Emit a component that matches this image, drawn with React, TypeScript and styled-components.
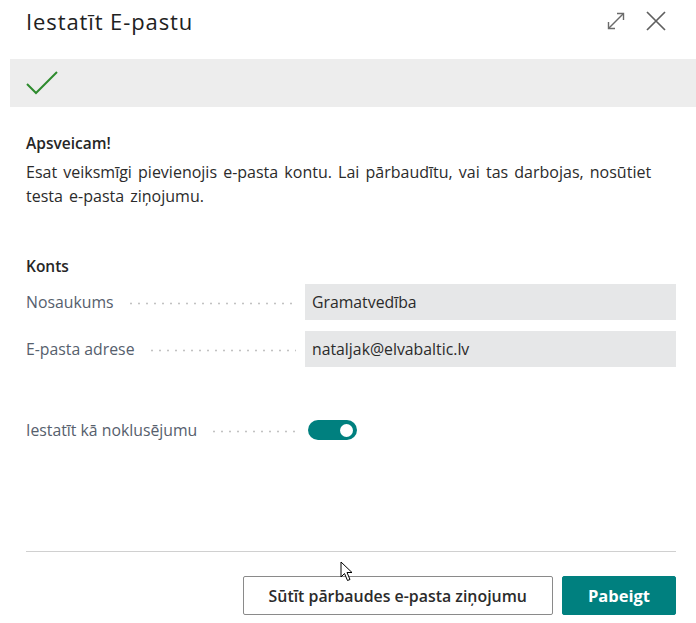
import React from "react"
import styled, { createGlobalStyle } from "styled-components"

const GlobalStyle = createGlobalStyle`
  html, body {
    margin: 0;
    padding: 0;
    background: #ffffff;
  }
  body {
    font-family: "Open Sans", "Noto Sans", "Liberation Sans", sans-serif;
    color: #2b2b2b;
  }
`

const Dialog = styled.div`
  position: relative;
  width: 696px;
  height: 623px;
  display: flex;
  flex-direction: column;
  background: #ffffff;
  overflow: hidden;
`

const Header = styled.div`
  height: 59px;
  display: flex;
  align-items: center;
  padding: 0 26px;
  box-sizing: border-box;
`

const Title = styled.h1`
  flex: 1;
  margin: 0 0 17px 0;
  font-size: 22px;
  font-weight: 500;
  color: #212121;
  letter-spacing: 0.9px;
`

const HeaderIcons = styled.div`
  display: flex;
  align-items: center;
  gap: 20px;
  margin: 0 4px 17px 0;
`

const IconButton = styled.span`
  display: flex;
  width: 20px;
  height: 20px;
`

const Banner = styled.div`
  margin-left: 10px;
  height: 48px;
  background: #ededed;
  display: flex;
  align-items: center;
  padding-left: 16px;
`

const Body = styled.div`
  flex: 1;
  padding: 26px 20px 0 26px;
  display: flex;
  flex-direction: column;
`

const Heading = styled.div`
  font-size: 15.5px;
  font-weight: 600;
  color: #262626;
  line-height: 20px;
`

const Paragraph = styled.p`
  margin: 7px 0 0 0;
  font-size: 16px;
  word-spacing: 2px;
  line-height: 24px;
  color: #2b2b2b;
`

const Section = styled.div<{ $top: number }>`
  margin-top: ${p => p.$top}px;
  display: flex;
  flex-direction: column;
`

const Row = styled.div<{ $gap?: number }>`
  display: flex;
  align-items: center;
  margin-top: ${p => p.$gap ?? 0}px;
`

const Label = styled.div`
  width: 270px;
  flex: none;
  display: flex;
  align-items: center;
  font-size: 15.8px;
  color: #56606d;
  margin-right: 9px;
`

const Leader = styled.span`
  flex: 1;
  height: 3px;
  margin: 2px 0 0 13px;
  background-image: radial-gradient(circle, #c2c2c2 0.9px, transparent 1.2px);
  background-size: 8px 3px;
  background-repeat: repeat-x;
  background-position: left center;
`

const Field = styled.div`
  flex: 1;
  height: 36px;
  box-sizing: border-box;
  background: #e6e7e8;
  display: flex;
  align-items: center;
  padding-left: 7px;
  font-size: 15.8px;
  color: #2b2b2b;
`

const Toggle = styled.div<{ $on: boolean }>`
  width: 49px;
  height: 20px;
  margin-left: 3px;
  border-radius: 10px;
  background: ${p => (p.$on ? "#00807f" : "#ffffff")};
  display: flex;
  align-items: center;
  justify-content: ${p => (p.$on ? "flex-end" : "flex-start")};
  padding: 0 4px;
  box-sizing: border-box;

  &::after {
    content: "";
    width: 13px;
    height: 13px;
    border-radius: 50%;
    background: #ffffff;
  }
`

const Footer = styled.div`
  margin: 0 20px 0 26px;
  border-top: 1px solid #d0d0d0;
  padding: 24px 0 8px 0;
  display: flex;
  justify-content: flex-end;
  gap: 9px;
`

const Button = styled.button<{ $primary?: boolean }>`
  height: 39px;
  box-sizing: border-box;
  padding: 0 25px;
  font-family: inherit;
  font-size: ${p => (p.$primary ? 16.5 : 15.9)}px;
  font-weight: ${p => (p.$primary ? 700 : 600)};
  border-radius: 2px;
  cursor: pointer;
  border: 1px solid ${p => (p.$primary ? "#00807f" : "#8a8a8a")};
  background: ${p => (p.$primary ? "#00807f" : "#ffffff")};
  color: ${p => (p.$primary ? "#ffffff" : "#2b2b2b")};
`

const Pointer = styled.svg`
  position: absolute;
  left: 340px;
  top: 561px;
`

const ExpandIcon = () => (
  <svg width="20" height="20" viewBox="0 0 20 20" fill="none" stroke="#6b6b6b" strokeWidth="1.4">
    <path d="M2.5 17.5 L17.5 2.5" />
    <path d="M11 2.5 H17.5 V9" />
    <path d="M2.5 11 V17.5 H9" />
  </svg>
)

const CloseIcon = () => (
  <svg width="20" height="20" viewBox="0 0 20 20" fill="none" stroke="#5f5f5f" strokeWidth="1.7">
    <path d="M1 1 L19 19 M19 1 L1 19" />
  </svg>
)

const CheckIcon = () => (
  <svg width="32" height="24" viewBox="0 0 32 24" fill="none" stroke="#2e8b2e" strokeWidth="2">
    <path d="M1 13 L10 22 L31 1" />
  </svg>
)

const App: React.FC = () => {
  return (
    <>
      <GlobalStyle />
      <Dialog>
        <Header>
          <Title>Iestatīt E-pastu</Title>
          <HeaderIcons>
            <IconButton><ExpandIcon /></IconButton>
            <IconButton><CloseIcon /></IconButton>
          </HeaderIcons>
        </Header>
        <Banner>
          <CheckIcon />
        </Banner>
        <Body>
          <Heading>Apsveicam!</Heading>
          <Paragraph>
            Esat veiksmīgi pievienojis e-pasta kontu. Lai pārbaudītu, vai tas darbojas, nosūtiet testa e-pasta ziņojumu.
          </Paragraph>
          <Section $top={48}>
            <Heading>Konts</Heading>
            <Row $gap={8}>
              <Label>Nosaukums<Leader /></Label>
              <Field>Gramatvedība</Field>
            </Row>
            <Row $gap={11}>
              <Label>E-pasta adrese<Leader /></Label>
              <Field>nataljak@elvabaltic.lv</Field>
            </Row>
          </Section>
          <Section $top={52}>
            <Row>
              <Label>Iestatīt kā noklusējumu<Leader /></Label>
              <Toggle $on={true} />
            </Row>
          </Section>
        </Body>
        <Footer>
          <Button>Sūtīt pārbaudes e-pasta ziņojumu</Button>
          <Button $primary>Pabeigt</Button>
        </Footer>
        <Pointer width="18" height="22" viewBox="0 0 18 22">
          <path d="M1 1 L1 16 L4.5 12.5 L7.5 19.5 L10 18.5 L7 11.5 L12 11.5 Z" fill="#ffffff" stroke="#000000" strokeWidth="1" strokeLinejoin="round" />
        </Pointer>
      </Dialog>
    </>
  )
}

export default App
